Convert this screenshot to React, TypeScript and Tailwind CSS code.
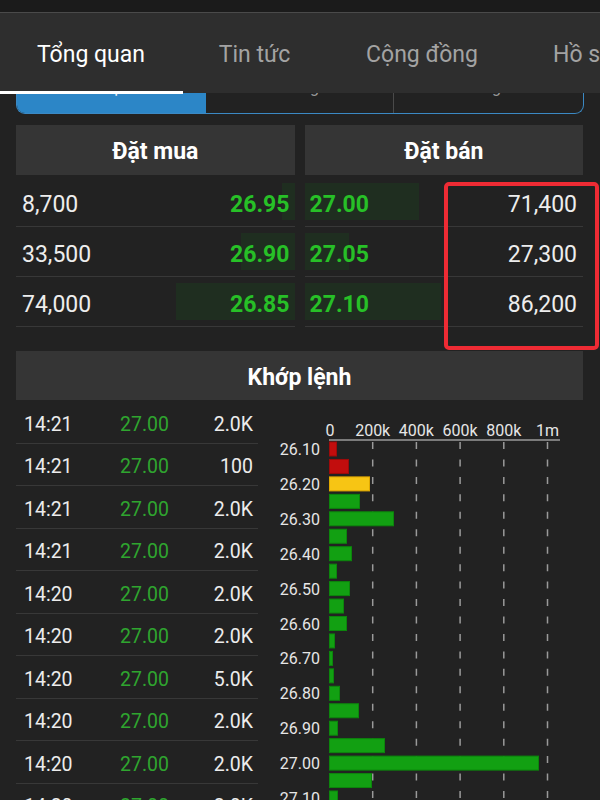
import React from "react";

const bookRows = [
  { bidVol: "8,700", bid: "26.95", bidBar: 13, ask: "27.00", askBar: 114, askVol: "71,400" },
  { bidVol: "33,500", bid: "26.90", bidBar: 54, ask: "27.05", askBar: 44, askVol: "27,300" },
  { bidVol: "74,000", bid: "26.85", bidBar: 119, ask: "27.10", askBar: 136, askVol: "86,200" },
];

const trades = [
  ["14:21", "27.00", "2.0K"],
  ["14:21", "27.00", "100"],
  ["14:21", "27.00", "2.0K"],
  ["14:21", "27.00", "2.0K"],
  ["14:20", "27.00", "2.0K"],
  ["14:20", "27.00", "2.0K"],
  ["14:20", "27.00", "5.0K"],
  ["14:20", "27.00", "2.0K"],
  ["14:20", "27.00", "2.0K"],
  ["14:20", "27.00", "2.0K"],
];

const barW = [7, 19, 40, 30, 64, 17, 22, 7, 20, 14, 17, 5, 3, 4, 10, 29, 8, 55, 209, 42, 8];

function Chart() {
  const ox = 258;
  const oy = 403;
  const x0 = 329;
  const step = 43.7;
  const ticks = ["0", "200k", "400k", "600k", "800k", "1m"];
  return (
    <svg width={325} height={420} className="block shrink-0">
      <g transform={`translate(${-ox},${-oy})`} fontFamily="Roboto, sans-serif">
        {ticks.map((t, i) => (
          <text key={t} x={x0 + step * i + (i === 0 ? 1 : 0)} y={439} fontSize={16} fill="#e6e6e6" textAnchor="middle">
            {t}
          </text>
        ))}
        <line x1={x0} y1={443} x2={560} y2={443} stroke="#9a9a9a" strokeWidth={1.5} />
        {[1, 2, 3, 4, 5].map((i) => (
          <line
            key={i}
            x1={x0 + step * i}
            y1={445}
            x2={x0 + step * i}
            y2={820}
            stroke="#9a9a9a"
            strokeWidth={1.5}
            strokeDasharray="7 10.45"
          />
        ))}
        {barW.map((w, i) => {
          const fill = i < 2 ? "#c20d0d" : i === 2 ? "#f7c514" : "#12a012";
          const stroke = i < 2 ? "#9e0a0a" : i === 2 ? "#e0a800" : "#0c860c";
          const y = 445 + 17.45 * i;
          return (
            <rect key={i} x={x0 + 0.5} y={y} width={w} height={14} fill={fill} stroke={stroke} strokeWidth={1} />
          );
        })}
        {barW.map((_, i) =>
          i % 2 === 0 ? (
            <text key={"l" + i} x={320} y={452 + 17.45 * i + 6} fontSize={16} fill="#e6e6e6" textAnchor="end">
              {(26.1 + 0.05 * i).toFixed(2)}
            </text>
          ) : null
        )}
      </g>
    </svg>
  );
}

export default function App() {
  return (
    <div
      className="relative h-[800px] w-[600px] overflow-hidden bg-[#222222] text-[#ececec]"
      style={{ fontFamily: "Roboto, 'Noto Sans', sans-serif" }}
    >
      <div className="h-[13px] bg-[#1b1b1b] border-b border-[#4a4a4a]" />
      <div className="relative z-10 flex h-[80px] items-center bg-[#2e2e2e] pt-[5px] text-[23px] whitespace-nowrap">
        <div className="w-[182px] shrink-0 text-center text-white">Tổng quan</div>
        <div className="w-[145px] shrink-0 text-center text-[#a3a3a3]">Tin tức</div>
        <div className="w-[190px] shrink-0 text-center text-[#a3a3a3]">Cộng đồng</div>
        <div className="shrink-0 pl-[36px] text-[#a3a3a3]">Hồ sơ</div>
        <div className="absolute bottom-[-1px] left-0 h-[3px] w-[183px] bg-white" />
      </div>

      <div className="mx-[16px] mt-[-22px] flex h-[43px] overflow-hidden rounded-b-[9px] border-[1.5px] border-t-0 border-[#3b89c4] text-[16px]">
        <div className="flex w-[189px] items-center justify-center bg-[#2c86c7] pb-[8px] text-white">Sổ lệnh</div>
        <div className="flex w-[188px] items-center justify-center border-r border-[#4a4a4a] pb-[8px] text-[#9a9a9a]">Nước ngoài</div>
        <div className="flex flex-1 items-center justify-center pb-[8px] text-[#9a9a9a]">Thống kê</div>
      </div>

      <div className="mt-[11px] grid grid-cols-2 gap-[10px] pl-[16px] pr-[17px]">
        {[0, 1].map((side) => (
          <div key={side}>
            <div className="mb-[2px] flex h-[50px] items-center justify-center bg-[#353535] pt-[4px] text-[23px] font-bold text-white">
              {side === 0 ? "Đặt mua" : "Đặt bán"}
            </div>
            {bookRows.map((r, i) => (
              <div key={i} className="relative flex h-[50px] items-center border-b border-[#383838] pt-[8px] text-[23px]">
                {side === 0 ? (
                  <>
                    <div className="absolute bottom-[6px] right-0 top-[6px] bg-[#1f2e20]" style={{ width: r.bidBar }} />
                    <span className="relative pl-[6px] text-[#ededed]">{r.bidVol}</span>
                    <span className="relative ml-auto pr-[5px] font-bold text-[#27c027]">{r.bid}</span>
                  </>
                ) : (
                  <>
                    <div className="absolute bottom-[6px] left-0 top-[6px] bg-[#1f2e20]" style={{ width: r.askBar }} />
                    <span className="relative pl-[5px] font-bold text-[#27c027]">{r.ask}</span>
                    <span className="relative ml-auto pr-[6px] text-[#ededed]">{r.askVol}</span>
                  </>
                )}
              </div>
            ))}
          </div>
        ))}
      </div>

      <div className="mx-[16px] mr-[17px] mt-[24px] flex h-[49px] items-center justify-center bg-[#353535] pt-[5px] text-[23px] font-bold text-white">
        Khớp lệnh
      </div>

      <div className="flex pl-[16px]">
        <div className="w-[242px] shrink-0 pt-[1px]">
          {trades.map((t, i) => (
            <div key={i} className="flex h-[42.5px] items-center border-b border-[#383838] pt-[5px] text-[19.5px]">
              <span className="w-[104px] pl-[8px] text-[#ececec]">{t[0]}</span>
              <span className="text-[#2fa52f]">{t[1]}</span>
              <span className="ml-auto pr-[5px] text-[#ececec]">{t[2]}</span>
            </div>
          ))}
        </div>
        <Chart />
      </div>

      <div className="pointer-events-none absolute left-[444px] top-[182px] h-[168px] w-[155px] rounded-[5px] border-[4px] border-[#ee2b34]" />
    </div>
  );
}
